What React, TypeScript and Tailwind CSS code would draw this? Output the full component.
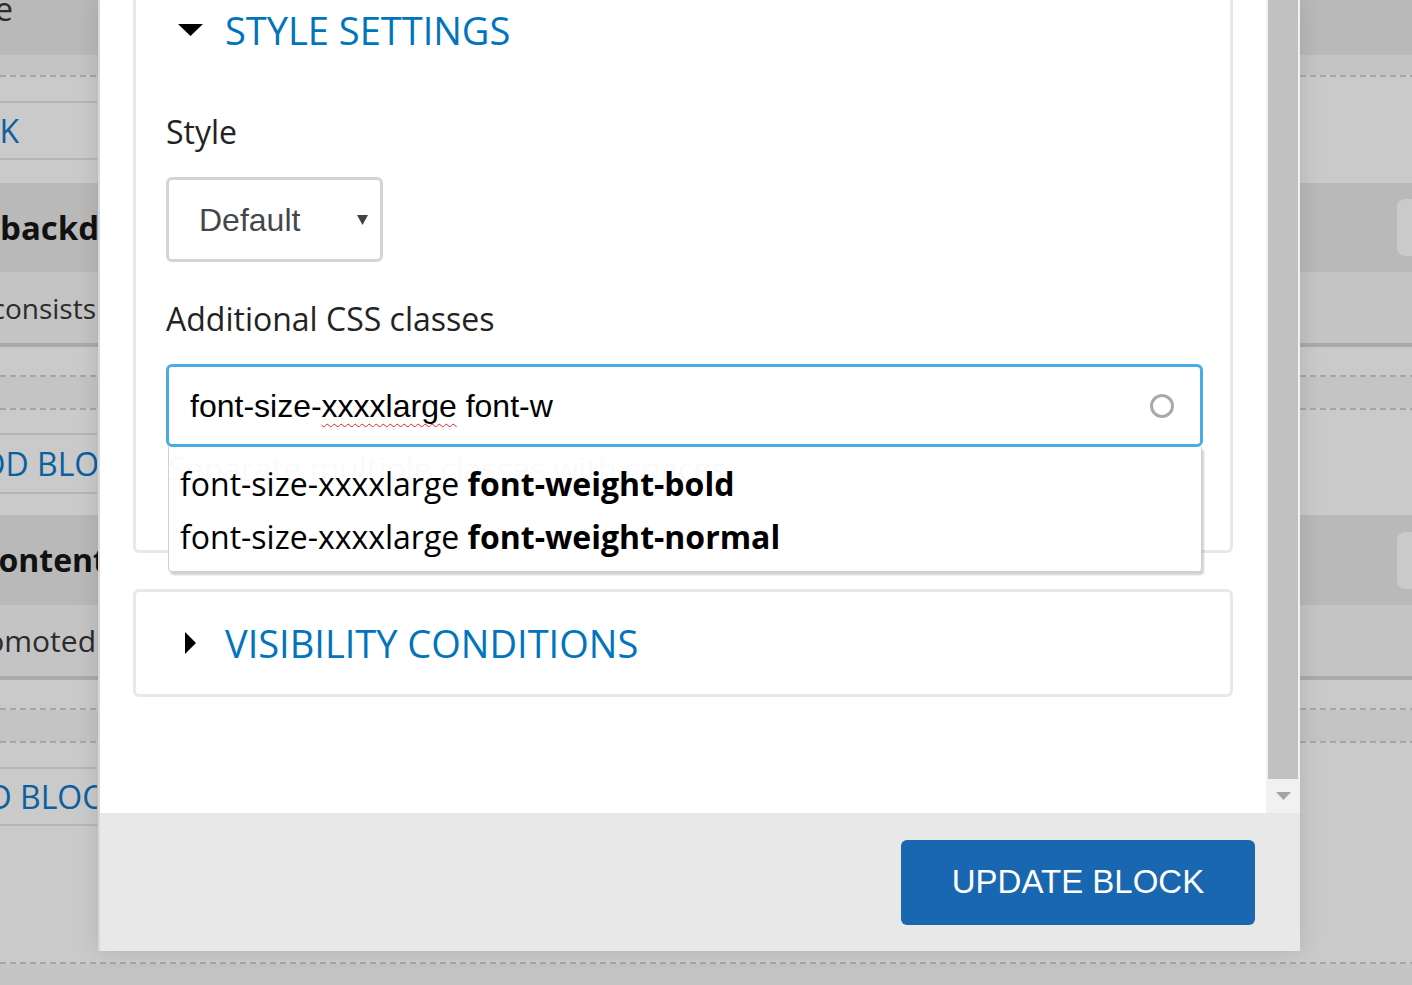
import React from "react";

function Dashed() {
  return (
    <div className="h-[2px] bg-[repeating-linear-gradient(90deg,#a6a6a6_0_6px,transparent_6px_10px)]" />
  );
}

function SideButton() {
  return <div className="w-[40px] h-[57px] mr-[-25px] rounded-[8px] bg-[#cacaca]" />;
}

export default function App() {
  return (
    <div className="relative w-[1412px] h-[985px] overflow-hidden bg-[#cacaca] font-['Open_Sans',sans-serif]">
      {/* Page behind the dialog */}
      <div className="flex flex-col h-full text-[#2b2b2b]">
        <div className="h-[55px] bg-[#b9b9b9] overflow-hidden">
          <div className="mt-[-13px] w-[13px] flex justify-end whitespace-nowrap text-[32px] leading-[44px]">
            Title
          </div>
        </div>
        <div className="h-[20px] bg-[#c4c4c4]" />
        <Dashed />
        <div className="h-[24px]" />
        <div className="h-[59px]">
          <div className="w-[97px] h-full border-y-2 border-[#b5b5b5] flex items-center">
            <div className="w-[19px] flex justify-end whitespace-nowrap text-[32px] text-[#0d5f9f]">
              ADD BLOCK
            </div>
          </div>
        </div>
        <div className="h-[23px]" />
        <div className="h-[89px] bg-[#b9b9b9] flex items-center justify-between">
          <span className="whitespace-nowrap text-[33px] font-bold text-[#111]">backdrop</span>
          <SideButton />
        </div>
        <div className="h-[71px] bg-[#c4c4c4] flex items-center">
          <div className="w-[96px] flex justify-end whitespace-nowrap text-[28px]">Block consists</div>
        </div>
        <div className="h-[4px] bg-[#aaaaaa]" />
        <div className="h-[28px]" />
        <Dashed />
        <div className="h-[31px] bg-[#c4c4c4]" />
        <Dashed />
        <div className="h-[23px]" />
        <div className="h-[61px]">
          <div className="w-[97px] h-full border-y-2 border-[#b5b5b5] flex items-center overflow-hidden">
            <span className="ml-[-38px] whitespace-nowrap text-[32px] text-[#0d5f9f]">ADD BLOCK</span>
          </div>
        </div>
        <div className="h-[21px]" />
        <div className="h-[90px] bg-[#b9b9b9] flex items-center justify-between">
          <span className="ml-[-22px] whitespace-nowrap text-[32px] font-bold text-[#111]">Content</span>
          <SideButton />
        </div>
        <div className="h-[71px] bg-[#c4c4c4] flex items-center">
          <div className="w-[96px] flex justify-end whitespace-nowrap text-[30px]">Not promoted</div>
        </div>
        <div className="h-[4px] bg-[#aaaaaa]" />
        <div className="h-[28px]" />
        <Dashed />
        <div className="h-[31px] bg-[#c4c4c4]" />
        <Dashed />
        <div className="h-[24px]" />
        <div className="h-[59px]">
          <div className="w-[97px] h-full border-y-2 border-[#b5b5b5] flex items-center overflow-hidden">
            <span className="ml-[-55px] whitespace-nowrap text-[32px] text-[#0d5f9f]">ADD BLOCK</span>
          </div>
        </div>
        <div className="h-[136px]" />
        <Dashed />
        <div className="flex-1 bg-[#c4c4c4]" />
      </div>

      {/* Dialog */}
      <div className="absolute left-[98px] top-0 w-[1202px] h-[951px] flex flex-col border-l-2 border-[#d8d8d8] shadow-[0_0_22px_rgba(0,0,0,0.12)]">
        <div className="flex flex-1 min-h-0">
          <div className="flex-1 bg-white px-[33px]">
            {/* Style settings */}
            <div className="border-x-[3px] border-b-[3px] border-[#e8e8e8] rounded-b-[6px] pt-[7px] pl-[30px] pr-[27px] pb-[59px]">
              <div className="h-[46px] flex items-center pl-[12px] gap-[22px]">
                <svg width="25" height="12" viewBox="0 0 25 12">
                  <polygon points="0,0 25,0 12.5,12" fill="#000" />
                </svg>
                <span className="text-[38px] text-[#0074bd] whitespace-nowrap">STYLE SETTINGS</span>
              </div>

              <div className="mt-[57px] text-[32px] leading-[44px] text-[#232323]">Style</div>
              <div className="mt-[23px] w-[217px] h-[85px] border-[3px] border-[#d4d4d4] rounded-[6px] flex items-center justify-between pl-[30px] pr-[12px] font-['Liberation_Sans',Arial,sans-serif] text-[32px] text-[#45474b]">
                <span>Default</span>
                <svg width="11" height="11" viewBox="0 0 11 11">
                  <polygon points="0,1 11,1 5.5,11" fill="#3f4348" />
                </svg>
              </div>

              <div className="mt-[35px] text-[32px] leading-[44px] text-[#232323]">Additional CSS classes</div>
              <div className="relative mt-[23px]">
                <div className="h-[83px] border-[3px] border-[#47ade2] rounded-[6px] flex items-center justify-between pl-[21px] pr-[25px] font-['Liberation_Sans',Arial,sans-serif] text-[32px] text-black">
                  <span className="whitespace-nowrap">
                    font-size-
                    <span className="underline decoration-wavy decoration-[#e52222] decoration-1 underline-offset-[6px] [text-decoration-skip-ink:none]">xxxxlarge</span>{" "}
                    font-w
                  </span>
                  <svg width="26" height="26" viewBox="0 0 26 26">
                    <circle cx="13" cy="13" r="10.5" fill="none" stroke="#a9a9a9" strokeWidth="3" />
                  </svg>
                </div>
                <div className="pl-[2px] text-[32px] leading-[44px] text-[#b4b4b4] whitespace-nowrap">
                  Separate multiple classes with spaces.
                </div>

                {/* Autocomplete menu */}
                <div className="absolute left-[2px] right-[1px] top-[83px] bg-white/[0.93] border border-t-0 border-[#cfcfcf] rounded-b-[4px] shadow-[2px_3px_2px_rgba(0,0,0,0.18)] pt-[10px] pb-[8px] text-[32px] text-black">
                  <div className="h-[53px] flex items-center pl-[11px] whitespace-nowrap">
                    font-size-xxxxlarge&nbsp;<span className="font-bold">font-weight-bold</span>
                  </div>
                  <div className="h-[53px] flex items-center pl-[11px] whitespace-nowrap">
                    font-size-xxxxlarge&nbsp;<span className="font-bold">font-weight-normal</span>
                  </div>
                </div>
              </div>
            </div>

            {/* Visibility conditions */}
            <div className="mt-[36px] h-[108px] border-[3px] border-[#e8e8e8] rounded-[6px] flex items-center pl-[42px] gap-[22px]">
              <div className="w-[25px] flex justify-center">
                <svg width="11" height="22" viewBox="0 0 11 22">
                  <polygon points="0,0 11,11 0,22" fill="#000" />
                </svg>
              </div>
              <span className="text-[38px] text-[#0074bd] whitespace-nowrap">VISIBILITY CONDITIONS</span>
            </div>
          </div>

          {/* Scrollbar */}
          <div className="w-[34px] bg-[#f1f1f1] flex flex-col">
            <div className="flex-1 mx-[2px] bg-[#c1c1c1]" />
            <div className="h-[34px] flex items-center justify-center">
              <svg width="15" height="8" viewBox="0 0 15 8">
                <polygon points="0,0 15,0 7.5,8" fill="#a3a3a3" />
              </svg>
            </div>
          </div>
        </div>

        {/* Footer */}
        <div className="h-[138px] bg-[#e8e8e8] flex items-center justify-end pr-[45px]">
          <button className="w-[354px] h-[85px] rounded-[6px] bg-[#1967b1] text-white text-[33px] font-['Liberation_Sans',Arial,sans-serif]">
            UPDATE BLOCK
          </button>
        </div>
      </div>
    </div>
  );
}
